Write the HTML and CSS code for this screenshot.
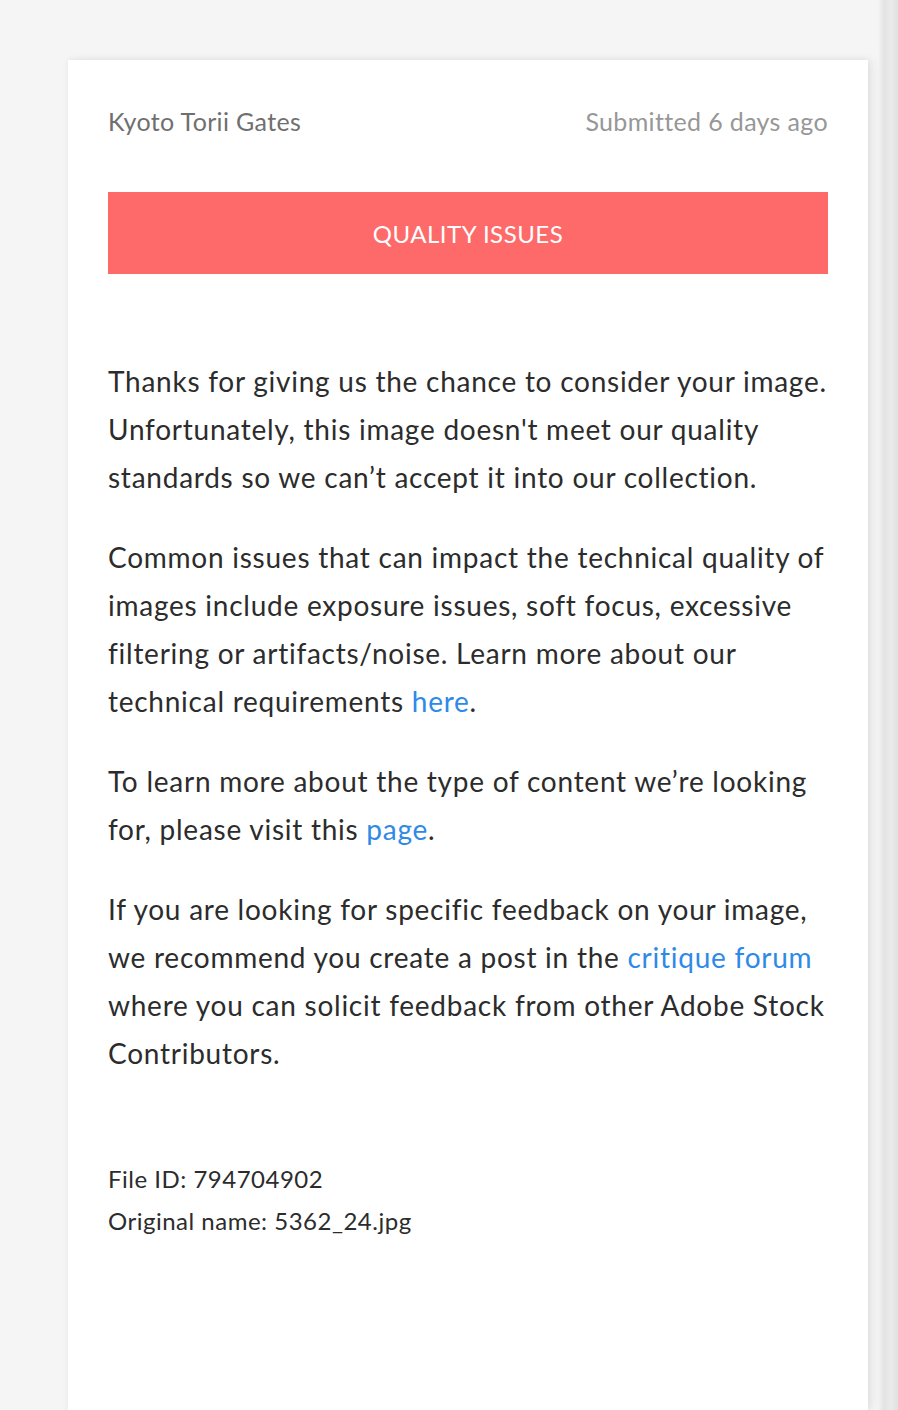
FILE: index.html
```html
<!DOCTYPE html>
<html lang="en">
<head>
<meta charset="utf-8">
<title>Quality Issues</title>
<link rel="stylesheet" href="styles.css">
</head>
<body>
<main class="card">
  <header class="card-head">
    <span class="title">Kyoto Torii Gates</span>
    <span class="date">Submitted 6 days ago</span>
  </header>
  <div class="banner">QUALITY ISSUES</div>
  <section class="message">
    <p>Thanks for giving us the chance to consider your image. Unfortunately, this image doesn't meet our quality standards so we can’t accept it into our collection.</p>
    <p>Common issues that can impact the technical quality of images include exposure issues, soft focus, excessive filtering or artifacts/noise. Learn more about our technical requirements <a href="#">here</a>.</p>
    <p>To learn more about the type of content we’re looking for, please visit this <a href="#">page</a>.</p>
    <p>If you are looking for specific feedback on your image, we recommend you create a post in the <a href="#">critique forum</a> where you can solicit feedback from other Adobe Stock Contributors.</p>
  </section>
  <footer class="file-info">
    <div>File ID: 794704902</div>
    <div>Original name: 5362_24.jpg</div>
  </footer>
</main>
</body>
</html>
```

FILE: styles.css
```css
html {
  background: linear-gradient(to right, #f5f5f5 0, #f5f5f5 878px, #e3e3e3 884px, #ebebeb 891px, #e0e0e0 898px);
  min-height: 100%;
}
body {
  margin: 0;
  padding-top: 60px;
  font-family: Lato, "Open Sans", sans-serif;
  color: #2c2c2c;
  height: 1350px;
  overflow: hidden;
}
.card {
  margin-left: 68px;
  width: 800px;
  height: 1350px;
  box-sizing: border-box;
  padding: 40px 40px 0;
  background: #fff;
  box-shadow: 0 0 6px rgba(0, 0, 0, 0.07), 6px 0 10px rgba(0, 0, 0, 0.05);
}
.card-head {
  display: flex;
  justify-content: space-between;
  font-size: 25px;
  line-height: 43px;
  letter-spacing: 0.35px;
}
.title { color: #6f6f6f; }
.date { color: #979797; }
.banner {
  margin-top: 49px;
  height: 82px;
  background: #fe6a6a;
  color: #fff;
  font-size: 24px;
  letter-spacing: 0.5px;
  display: flex;
  align-items: center;
  justify-content: center;
}
.message {
  margin-top: 83px;
  font-size: 28px;
  line-height: 48px;
  letter-spacing: 0.75px;
}
.message p {
  margin: 0 0 32px;
}
.message p:last-child { margin-bottom: 0; }
.message a {
  color: #2e8ae6;
  text-decoration: none;
}
.file-info {
  margin-top: 81px;
  font-size: 24px;
  line-height: 42px;
  letter-spacing: 0.5px;
}
```
